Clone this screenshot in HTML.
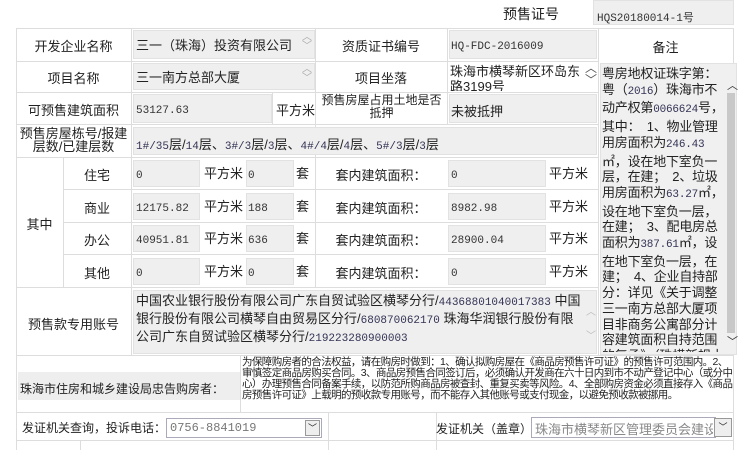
<!DOCTYPE html>
<html><head><meta charset="utf-8"><style>
*{margin:0;padding:0;box-sizing:border-box}
body{width:750px;height:450px;background:#fff;position:relative;overflow:hidden;font-family:"Liberation Sans","WenQuanYi Zen Hei","Noto Sans CJK SC",sans-serif;font-size:13px;color:#222}
.a{position:absolute;white-space:nowrap}
.h{position:absolute;background:#ddd;height:1px}
.v{position:absolute;background:#ddd;width:1px}
.in{position:absolute;background:#efefef;border:1px solid #e2e2e2}
.c{text-align:center}
.t{font-family:"Liberation Mono","WenQuanYi Zen Hei",monospace;font-size:11px;color:#333}
.n{font-family:"Liberation Mono",monospace;font-size:11px;color:#335}
.sa{position:absolute;color:#aaa;font-size:10px;line-height:9px}
</style></head><body>
<div class="a" style="left:503px;top:4px;font-size:14px">预售证号</div>
<div class="in" style="left:593px;top:0;width:141px;height:25px"></div>
<div class="a t" style="left:597px;top:9px">HQS20180014-1号</div>

<div class="h" style="left:16px;top:28px;width:718px"></div>
<div class="h" style="left:16px;top:61px;width:583px"></div>
<div class="h" style="left:16px;top:92px;width:583px"></div>
<div class="h" style="left:16px;top:124px;width:583px"></div>
<div class="h" style="left:16px;top:157px;width:583px"></div>
<div class="h" style="left:63px;top:189px;width:536px"></div>
<div class="h" style="left:63px;top:222px;width:536px"></div>
<div class="h" style="left:63px;top:254px;width:536px"></div>
<div class="h" style="left:16px;top:287px;width:583px"></div>
<div class="h" style="left:16px;top:355px;width:718px"></div>
<div class="h" style="left:16px;top:412px;width:718px"></div>
<div class="h" style="left:16px;top:440px;width:718px"></div>
<div class="v" style="left:16px;top:28px;height:422px"></div>
<div class="v" style="left:733px;top:28px;height:422px"></div>
<div class="v" style="left:131px;top:28px;height:327px"></div>
<div class="v" style="left:63px;top:157px;height:130px"></div>
<div class="v" style="left:315px;top:28px;height:259px"></div>
<div class="v" style="left:447px;top:28px;height:96px"></div>
<div class="v" style="left:272px;top:92px;height:32px"></div>
<div class="v" style="left:598px;top:28px;height:327px"></div>
<div class="v" style="left:240px;top:355px;height:57px"></div>
<div class="v" style="left:328px;top:412px;height:38px"></div>
<div class="v" style="left:436px;top:412px;height:38px"></div>
<div class="v" style="left:80px;top:440px;height:10px"></div>

<div class="a c" style="left:16px;top:36px;width:115px">开发企业名称</div>
<div class="in" style="left:133px;top:30px;width:182px;height:29px"></div>
<div class="a" style="left:136px;top:35px">三一（珠海）投资有限公司</div>
<div class="sa" style="left:302px;top:33px">︿<br>﹀</div>
<div class="a c" style="left:315px;top:36px;width:132px">资质证书编号</div>
<div class="in" style="left:449px;top:30px;width:148px;height:29px"></div>
<div class="a t" style="left:451px;top:41px">HQ-FDC-2016009</div>
<div class="a c" style="left:598px;top:37px;width:135px">备注</div>

<div class="a c" style="left:16px;top:68px;width:115px">项目名称</div>
<div class="in" style="left:133px;top:63px;width:182px;height:27px"></div>
<div class="a" style="left:136px;top:67px">三一南方总部大厦</div>
<div class="sa" style="left:302px;top:65px">︿<br>﹀</div>
<div class="a c" style="left:315px;top:68px;width:132px">项目坐落</div>
<div class="a" style="left:450px;top:64px;line-height:15px;height:27px;overflow:hidden;white-space:normal;width:132px">珠海市横琴新区环岛东路3199号</div>
<div class="a" style="left:585px;top:62px;font-size:12px;color:#555;line-height:12px">︿<br>﹀</div>

<div class="a c" style="left:16px;top:100px;width:115px">可预售建筑面积</div>
<div class="in" style="left:133px;top:94px;width:139px;height:29px"></div>
<div class="a t" style="left:136px;top:105px">53127.63</div>
<div class="a" style="left:276px;top:100px">平方米</div>
<div class="a c" style="left:316px;top:94px;width:131px;font-size:12px;line-height:13px;white-space:normal">预售房屋占用土地是否抵押</div>
<div class="in" style="left:449px;top:94px;width:148px;height:29px"></div>
<div class="a" style="left:451px;top:101px">未被抵押</div>

<div class="a c" style="left:16px;top:127px;width:115px;line-height:13px;white-space:normal">预售房屋栋号/报建层数/已建层数</div>
<div class="in" style="left:133px;top:127px;width:464px;height:28px"></div>
<div class="a" style="left:136px;top:134px"><span class="n">1#/35</span>层/<span class="n">14</span>层、<span class="n">3#/3</span>层/<span class="n">3</span>层、<span class="n">4#/4</span>层/<span class="n">4</span>层、<span class="n">5#/3</span>层/<span class="n">3</span>层</div>

<div class="a c" style="left:16px;top:214px;width:47px">其中</div>
<div id="rows"></div>

<div class="in" style="left:600px;top:63px;width:137px;height:292px;background:#f0f0f0"></div>
<div class="a" style="left:602px;top:66px;width:125px;white-space:normal;line-height:15.7px;height:286px;overflow:hidden;letter-spacing:-0.2px">粤房地权证珠字第：粤（<span class="n">2016</span>）珠海市不动产权第<span class="n">0066624</span>号，其中：　1、物业管理用房面积为<span class="n">246.43</span>㎡，设在地下室负一层，在建；　2、垃圾用房面积为<span class="n">63.27</span>㎡，设在地下室负一层，在建；　3、配电房总面积为<span class="n">387.61</span>㎡，设在地下室负一层，在建；　4、企业自持部分：详见《关于调整三一南方总部大厦项目非商务公寓部分计容建筑面积自持范围的复函》（珠横新规土函<span class="n">[2019]737</span>号）；　5、以下房源</div>
<div class="a" style="left:727px;top:93px;width:8px;height:240px;background:#c8c8c8"></div>
<div class="a" style="left:727px;top:77px;font-size:11px;color:#333">︿</div>
<div class="a" style="left:727px;top:333px;font-size:11px;color:#333">﹀</div>

<div class="a c" style="left:16px;top:314px;width:115px">预售款专用账号</div>
<div class="in" style="left:133px;top:290px;width:464px;height:64px"></div>
<div class="a" style="left:136px;top:293px;width:448px;white-space:normal;line-height:15px">中国农业银行股份有限公司广东自贸试验区横琴分行/<span class="n">44368801040017383</span> 中国银行股份有限公司横琴自由贸易区分行/<span class="n">680870062170</span> 珠海华润银行股份有限公司广东自贸试验区横琴分行/<span class="n">219223280900003</span></div>
<div class="sa" style="left:586px;top:308px;color:#bbb">︿</div>
<div class="sa" style="left:586px;top:332px;color:#bbb">﹀</div>

<div class="a" style="left:18px;top:372px;width:222px;height:28px;background:#eee"></div>
<div class="a" style="left:20px;top:380px;font-size:12px">珠海市住房和城乡建设局忠告购房者：</div>
<div class="a" style="left:242px;top:357px;width:492px;white-space:normal;font-size:10.5px;line-height:11px;letter-spacing:-0.6px">为保障购房者的合法权益，请在购房时做到：1、确认拟购房屋在《商品房预售许可证》的预售许可范围内。2、审慎签定商品房购买合同。3、商品房预售合同签订后，必须确认开发商在六十日内到市不动产登记中心（或分中心）办理预售合同备案手续，以防范所购商品房被查封、重复买卖等风险。4、全部购房资金必须直接存入《商品房预售许可证》上载明的预收款专用账号，而不能存入其他账号或支付现金，以避免预收款被挪用。</div>

<div class="a" style="left:22px;top:419px;font-size:12px">发证机关查询，投诉电话：</div>
<div class="a" style="left:166px;top:418px;width:156px;height:20px;border:1px solid #aab;background:#fff"></div>
<div class="a" style="left:170px;top:421px;color:#777;font-family:'Liberation Mono',monospace;font-size:12px">0756-8841019</div>
<div class="a" style="left:305px;top:420px;width:15px;height:16px;border:1px solid #999;background:#eee;font-size:9px;text-align:center;line-height:14px">﹀</div>
<div class="a" style="left:436px;top:420px;font-size:12px">发证机关（盖章）</div>
<div class="a" style="left:531px;top:417px;width:185px;height:21px;border:1px solid #aab;background:#fff;overflow:hidden"></div>
<div class="a" style="left:535px;top:419px;width:178px;overflow:hidden;color:#888">珠海市横琴新区管理委员会建设环</div>
<div class="a" style="left:714px;top:418px;width:18px;height:19px;border:1px solid #999;background:#eee;font-size:9px;text-align:center;line-height:16px">﹀</div>

<script>
var d=[["住宅","0","0","0"],["商业","12175.82","188","8982.98"],["办公","40951.81","636","28900.04"],["其他","0","0","0"]];
var h="";
d.forEach(function(r,i){var y=157+i*32.5;
h+='<div class="a c" style="left:63px;top:'+(y+8)+'px;width:68px">'+r[0]+'</div>'+
'<div class="in" style="left:133px;top:'+(y+3)+'px;width:67px;height:27px"></div>'+
'<div class="a t" style="left:136px;top:'+(y+13)+'px">'+r[1]+'</div>'+
'<div class="a" style="left:204px;top:'+(y+6)+'px">平方米</div>'+
'<div class="in" style="left:246px;top:'+(y+3)+'px;width:48px;height:27px"></div>'+
'<div class="a t" style="left:248px;top:'+(y+13)+'px">'+r[2]+'</div>'+
'<div class="a" style="left:296px;top:'+(y+6)+'px">套</div>'+
'<div class="a c" style="left:315px;top:'+(y+8)+'px;width:132px">套内建筑面积：</div>'+
'<div class="in" style="left:448px;top:'+(y+3)+'px;width:98px;height:27px"></div>'+
'<div class="a t" style="left:451px;top:'+(y+13)+'px">'+r[3]+'</div>'+
'<div class="a" style="left:549px;top:'+(y+6)+'px">平方米</div>';});
document.getElementById("rows").innerHTML=h;
</script>
</body></html>
